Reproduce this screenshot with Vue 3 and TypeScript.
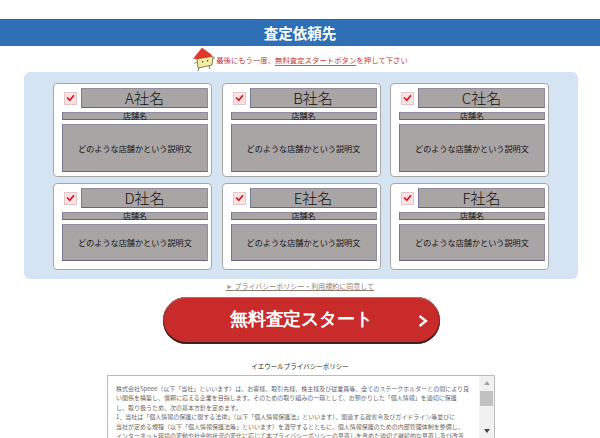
<script setup lang="ts">
interface Company { name: string; h: string }
const companies: Company[] = [
  { name: 'A社名', h: 'tall' }, { name: 'B社名', h: 'tall' }, { name: 'C社名', h: 'tall' },
  { name: 'D社名', h: 'short' }, { name: 'E社名', h: 'short' }, { name: 'F社名', h: 'short' },
];
</script>

<template>
  <div class="page">
    <h1 class="bar">査定依頼先</h1>
    <div class="notice">
      <svg class="mascot" width="24" height="26" viewBox="0 0 24 26">
        <path d="M5 12 L21 10 L20 19 L6 22 Z" fill="#f3eea0" stroke="#6b6440" stroke-width=".8" />
        <path d="M1.5 12.5 L10 2 L19 8.5 L19.5 10.5 L5 13 Z" fill="#e0392b" stroke="#c9302a" stroke-width=".5" />
        <circle cx="10.7" cy="15.7" r=".8" fill="#333" /><circle cx="15.6" cy="14.7" r=".8" fill="#333" />
        <path d="M7 22 L6 25 M17 20 L18 23 M5 16 L2.5 17.5 M21 13 L23 11.5" stroke="#554" stroke-width=".8" fill="none" />
      </svg>
      <span class="notice-text">最後にもう一度、<u>無料査定スタートボタン</u>を押して下さい</span>
    </div>
    <section class="panel">
      <div class="grid">
        <article v-for="c in companies" :key="c.name" class="card" :class="c.h">
          <div class="top">
            <span class="check">
              <svg width="9" height="8" viewBox="0 0 9 8"><path d="M1 3.5 L3.8 6.3 L8 1.2" fill="none" stroke="#d9121f" stroke-width="1.7" /></svg>
            </span>
            <div class="name box">{{ c.name }}</div>
          </div>
          <div class="shop box">店舗名</div>
          <div class="desc box">どのような店舗かという説明文</div>
        </article>
      </div>
    </section>
    <p class="agree"><span class="tri">►</span> <span>プライバシーポリシー・利用規約に同意して</span></p>
    <button class="cta" type="button">
      <span class="cta-label">無料査定スタート</span>
      <svg class="chev" width="10" height="12" viewBox="0 0 10 12"><path d="M1.5 1 L8 6 L1.5 11" fill="none" stroke="#fff" stroke-width="2.3" /></svg>
    </button>
    <h2 class="policy-title">イエウールプライバシーポリシー</h2>
    <div class="policy">
      <div class="policy-text">
        <p>株式会社Speee（以下「当社」といいます）は、お客様、取引先様、株主様及び従業員等、全てのステークホルダーとの間により良<br>い関係を構築し、信頼に応える企業を目指します。そのための取り組みの一環として、お預かりした「個人情報」を適切に保護<br>し、取り扱うため、次の基本方針を定めます。</p>
        <p>1．当社は「個人情報の保護に関する法律」（以下「個人情報保護法」といいます）、関連する政省令及びガイドライン等並びに<br>当社が定める規程（以下「個人情報保護法等」といいます）を遵守するとともに、個人情報保護のための内部管理体制を整備し、<br>インターネット環境の変動や社会的状況の変化に応じて本プライバシーポリシーの見直しを含めた適切で継続的な見直し及び改善</p>
      </div>
      <div class="scroll">
        <span class="arrow up"></span>
        <span class="thumb"></span>
        <span class="arrow down"></span>
      </div>
    </div>
  </div>
</template>

<style>
html, body { margin: 0; background: #fff; overflow: hidden; }
</style>

<style scoped>
.page {
  width: 600px; height: 438px; overflow: hidden; padding-top: 19px; box-sizing: border-box;
  font-family: "Noto Sans CJK JP", "Liberation Sans", sans-serif; color: #222;
}
.bar {
  margin: 0; height: 27px; background: #2e6fb5; border-top: 1px solid #2a639f; box-sizing: border-box;
  color: #fff; font-size: 14.5px; font-weight: 700; line-height: 25px; text-align: center;
}
.notice { height: 26px; display: flex; align-items: center; justify-content: center; }
.notice-text { color: #c23a3a; font-size: 7.4px; line-height: 13px; white-space: nowrap; }
.notice-text u { text-decoration-color: #d9534f; text-underline-offset: 2px; }
.panel {
  margin-left: 24px; width: 554px; height: 207px; box-sizing: border-box; background: #d5e4f3;
  border-radius: 6px; padding: 11px 0 0 29px;
}
.grid { display: grid; grid-template-columns: 159px 159px 159px; column-gap: 9.5px; row-gap: 6px; }
.card {
  background: #fff; border: 1px solid #a9a5a2; border-radius: 4px; box-sizing: border-box;
  padding: 4px 3px 0 8px; display: flex; flex-direction: column;
}
.card.tall { height: 94px; }
.card.short { height: 87px; }
.top { display: flex; align-items: center; height: 20px; }
.check {
  width: 13px; height: 13px; box-sizing: border-box; margin: 0 4px 0 2px; background: #fbe3e4;
  border: 1px solid #e6c5c7; display: flex; align-items: center; justify-content: center; flex: none;
}
.box {
  background: #a9a5a5; box-sizing: border-box; border: 1px solid #8f8d9e;
  border-left-color: #77779a; border-bottom-color: #66668a; text-align: center; color: #111;
}
.name { flex: 1; height: 20px; font-size: 15px; line-height: 18px; font-weight: 300; }
.shop { margin-top: 4px; height: 8px; font-size: 8px; line-height: 6px; }
.desc { margin-top: 4px; font-size: 8.15px; display: flex; align-items: center; justify-content: center; }
.tall .desc { height: 48px; }
.short .desc { height: 37px; }
.agree {
  margin: 2px 0 0; height: 11px; text-align: center; font-size: 7px; line-height: 11px; color: #8f7d70;
  text-decoration: underline;
}
.tri { color: #a39a90; }
.cta {
  display: flex; align-items: center; margin: 5px 0 0 163px; width: 277px; height: 47px; padding: 0;
  border: 0; border-radius: 24px; background: #c92a2a; box-sizing: border-box;
  box-shadow: inset 0 1px 0 #b96a66, inset 0 -2px 0 #3d2020, inset 1px 0 0 #7a2a28, inset -1px 0 0 #7a2a28;
}
.cta-label {
  margin: 0 0 3px 67px; color: #fff; font-size: 17.5px; letter-spacing: -0.2px; font-weight: 700; line-height: 24px; white-space: nowrap;
}
.chev { flex: none; margin-left: 46px; }
.policy-title { margin: 15px 0 0; height: 15px; font-size: 6.5px; font-weight: 400; line-height: 15px; text-align: center; color: #222; }
.policy {
  margin: 1px 0 0 107px; width: 388px; height: 70px; box-sizing: border-box; border: 1px solid #bbb;
  display: flex; justify-content: space-between; overflow: hidden;
}
.policy-text { width: 357px; padding: 8px 0 0 8px; font-size: 6px; line-height: 9.4px; color: #666; white-space: nowrap; }
.policy-text p { margin: 0; }
.scroll { width: 15px; background: #f1f1f1; display: flex; flex-direction: column; align-items: center; }
.arrow { width: 0; height: 0; border-left: 3px solid transparent; border-right: 3px solid transparent; }
.arrow.up { border-bottom: 4px solid #a3a3a3; margin-top: 5px; }
.arrow.down { border-top: 4px solid #444; margin-top: 23px; }
.thumb { width: 13px; height: 15px; background: #c1c1c1; margin-top: 6px; }
</style>
